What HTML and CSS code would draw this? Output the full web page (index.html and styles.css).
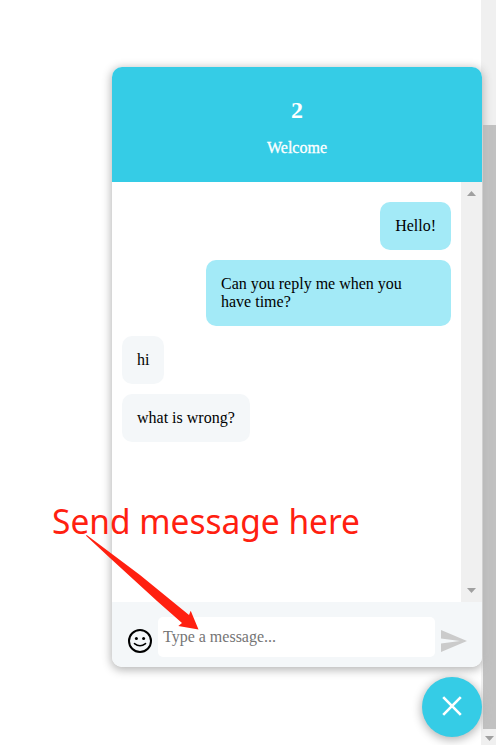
FILE: index.html
```html
<!DOCTYPE html>
<html lang="en">
<head>
<meta charset="utf-8">
<title>Chat widget</title>
<link rel="stylesheet" href="styles.css">
</head>
<body>
<div class="page-scrollbar">
  <div class="page-thumb"></div>
  <svg class="page-arrow" width="9" height="5" viewBox="0 0 9 5"><path d="M0 0H9L4.5 5Z"/></svg>
</div>
<div class="widget">
  <section class="conversation">
    <header class="header">
      <h4 class="title">2</h4>
      <span class="subtitle">Welcome</span>
    </header>
    <div class="body">
      <div class="messages">
        <div class="message client">Hello!</div>
        <div class="message client">Can you reply me when you have time?</div>
        <div class="message response">hi</div>
        <div class="message response">what is wrong?</div>
      </div>
      <div class="scrollbar">
        <svg width="9" height="5" viewBox="0 0 9 5"><path d="M0 5H9L4.5 0Z"/></svg>
        <svg width="9" height="5" viewBox="0 0 9 5"><path d="M0 0H9L4.5 5Z"/></svg>
      </div>
    </div>
    <form class="sender">
      <svg class="smiley" width="24" height="24" viewBox="0 0 24 24">
        <circle cx="12" cy="12" r="11" fill="none" stroke="#000" stroke-width="2"/>
        <circle cx="8.4" cy="9.5" r="1.5"/><circle cx="15.6" cy="9.5" r="1.5"/>
        <path d="M6.5 14.6Q12 18.8 17.5 14.6" fill="none" stroke="#000" stroke-width="1.6" stroke-linecap="round"/>
      </svg>
      <div class="input">Type a message...</div>
      <svg class="send" width="26" height="22" viewBox="0 0 26 22"><path d="M0 0L26 11L0 22V13.4L19 11L0 8.6Z"/></svg>
    </form>
  </section>
  <button class="launcher" type="button" aria-label="Close">
    <svg width="20" height="20" viewBox="0 0 20 20"><path d="M1.2 1.2L18.8 18.8M18.8 1.2L1.2 18.8"/></svg>
  </button>
</div>
<svg class="annotation" width="360" height="170" viewBox="30 480 360 170">
  <text x="52" y="533.5" textLength="308" lengthAdjust="spacingAndGlyphs">Send message here</text>
  <path d="M86 535.7L86.7 535L140 575L189 615L190.7 610.7L198.5 629.5L178.3 626L182 623L157 601L110 558Z"/>
</svg>
</body>
</html>
```
FILE: styles.css
```css
* { box-sizing: border-box; }
body {
  margin: 0;
  height: 745px;
  overflow: hidden;
  position: relative;
  background: #fff;
  font: 16px/18px "Liberation Serif", "Times New Roman", serif;
}
svg { display: block; flex: none; }
.page-scrollbar {
  width: 15px;
  height: 745px;
  margin-left: auto;
  padding: 125px 0 4px 2px;
  display: flex;
  flex-direction: column;
  justify-content: space-between;
  background: #f0f0f0;
}
.page-thumb { height: 604px; background: #c1c1c1; }
.page-arrow { margin-left: 2px; fill: #a0a0a0; }
.widget {
  position: absolute;
  right: 14px;
  bottom: 8px;
  width: 370px;
  display: flex;
  flex-direction: column;
  gap: 10px;
}
.conversation {
  border-radius: 10px;
  box-shadow: 0 2px 10px 1px #b5b5b5;
  overflow: hidden;
  background: #fff;
}
.header {
  height: 115px;
  padding: 30px 0 0;
  background: #35cce6;
  color: #fff;
  text-align: center;
}
.title { margin: 0 0 15px; font-size: 24px; line-height: 27px; }
.subtitle { display: block; -webkit-text-stroke: 0.3px #fff; }
.body { display: flex; height: 420px; }
.messages {
  flex: 1;
  display: flex;
  flex-direction: column;
  gap: 10px;
  padding: 20px 10px;
}
.message { max-width: 245px; padding: 15px; border-radius: 10px; color: #000; }
.client { align-self: flex-end; background: #a3eaf7; }
.response { align-self: flex-start; background: #f4f7f9; }
.scrollbar {
  width: 21px;
  padding: 9px 6px 9px;
  display: flex;
  flex-direction: column;
  justify-content: space-between;
  background: #f0f0f0;
  fill: #a0a0a0;
}
.sender {
  display: flex;
  align-items: flex-start;
  height: 65px;
  padding: 15px 15px 10px 16px;
  background: #f4f7f9;
}
.smiley { margin-top: 12px; }
.input {
  width: 277px;
  height: 40px;
  margin: 0 6px;
  padding: 11px 5px;
  border-radius: 5px;
  background: #fff;
  color: #757575;
}
.send { margin-top: 13px; fill: #cbcbcb; }
.launcher {
  align-self: flex-end;
  display: flex;
  align-items: center;
  justify-content: center;
  width: 60px;
  height: 60px;
  padding: 0 0 2px;
  border: 0;
  border-radius: 50%;
  background: #35cce6;
  box-shadow: 0 2px 10px 1px #b5b5b5;
}
.launcher path { fill: none; stroke: #fff; stroke-width: 2.6; }
.annotation {
  position: absolute;
  left: 30px;
  top: 480px;
  overflow: visible;
  fill: #ff2010;
  font: 35px "Noto Sans", "Open Sans", sans-serif;
}
```
